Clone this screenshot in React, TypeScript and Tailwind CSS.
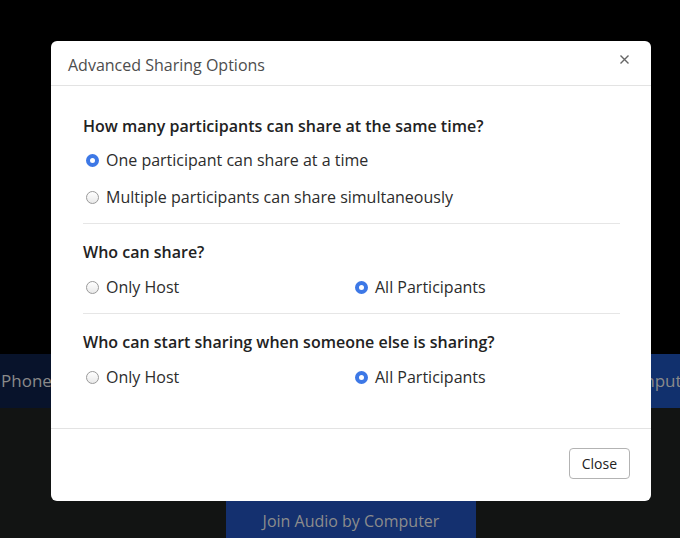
import React from "react";

const font = { fontFamily: '"Open Sans", "Noto Sans", sans-serif' };

function Radio({ checked }: { checked: boolean }) {
  return checked ? (
    <span className="inline-block w-[13px] h-[13px] rounded-full border-[4px] border-[#3d78e6] bg-white shrink-0" />
  ) : (
    <span className="inline-block w-[13px] h-[13px] rounded-full border border-[#9a9a9a] bg-gradient-to-b from-white to-[#e9e9e9] shrink-0" />
  );
}

function Option({ checked, label }: { checked: boolean; label: string }) {
  return (
    <div className="flex items-center h-[24px] ml-[3px] gap-[7px] text-[16px] text-[#2c2c2c]">
      <Radio checked={checked} />
      <span>{label}</span>
    </div>
  );
}

export default function App() {
  return (
    <div className="relative w-[680px] h-[538px] overflow-hidden bg-black flex flex-col" style={font}>
      <div className="h-[354px] bg-black shrink-0" />
      <div className="h-[54px] flex shrink-0 text-[17px] text-[#8a8a8a]">
        <div className="w-[340px] bg-[#08132b] flex items-center pl-[1px]">Phone Call</div>
        <div className="flex-1 bg-[#11306d] flex items-center pl-[278px] whitespace-nowrap overflow-hidden">Computer Audio</div>
      </div>
      <div className="flex-1 bg-[#121413]">
        <div className="ml-[226px] mt-[93px] w-[250px] h-[40px] bg-[#14306f] flex items-center justify-center text-[16px] text-[#8c8c8c]">
          Join Audio by Computer
        </div>
      </div>

      <div className="absolute left-[51px] top-[41px] w-[600px] h-[460px] bg-white rounded-[6px] flex flex-col">
        <div className="h-[45px] flex items-center justify-between pl-[17px] pr-[22px] pt-[4px] border-b border-[#e3e3e3]">
          <span className="text-[16px] text-[#4d4d4d]">Advanced Sharing Options</span>
          <svg width="9" height="9" viewBox="0 0 9 9" className="mt-[-12px]">
            <path d="M0.5 0.5 L8.5 8.5 M8.5 0.5 L0.5 8.5" stroke="#666" strokeWidth="1.4" />
          </svg>
        </div>
        <div className="flex-1 pl-[32px] pr-[31px] pt-[28px]">
          <div className="h-[24px] flex items-center text-[16px] font-semibold text-[#222]">
            How many participants can share at the same time?
          </div>
          <div className="mt-[10px]">
            <Option checked label="One participant can share at a time" />
          </div>
          <div className="mt-[13px]">
            <Option checked={false} label="Multiple participants can share simultaneously" />
          </div>
          <div className="mt-[14px] border-t border-[#e6e6e6]" />
          <div className="mt-[16px] h-[24px] flex items-center text-[16px] font-semibold text-[#222]">Who can share?</div>
          <div className="mt-[11px] grid grid-cols-[269px_1fr]">
            <Option checked={false} label="Only Host" />
            <Option checked label="All Participants" />
          </div>
          <div className="mt-[14px] border-t border-[#e6e6e6]" />
          <div className="mt-[16px] h-[24px] flex items-center text-[16px] font-semibold text-[#222]">
            Who can start sharing when someone else is sharing?
          </div>
          <div className="mt-[11px] grid grid-cols-[269px_1fr]">
            <Option checked={false} label="Only Host" />
            <Option checked label="All Participants" />
          </div>
        </div>
        <div className="h-[73px] border-t border-[#e3e3e3] flex items-start justify-end pt-[19px] pr-[21px]">
          <button className="h-[31px] px-[12px] border border-[#b3b3b3] rounded-[4px] text-[14px] text-[#222] bg-white">
            Close
          </button>
        </div>
      </div>
    </div>
  );
}
